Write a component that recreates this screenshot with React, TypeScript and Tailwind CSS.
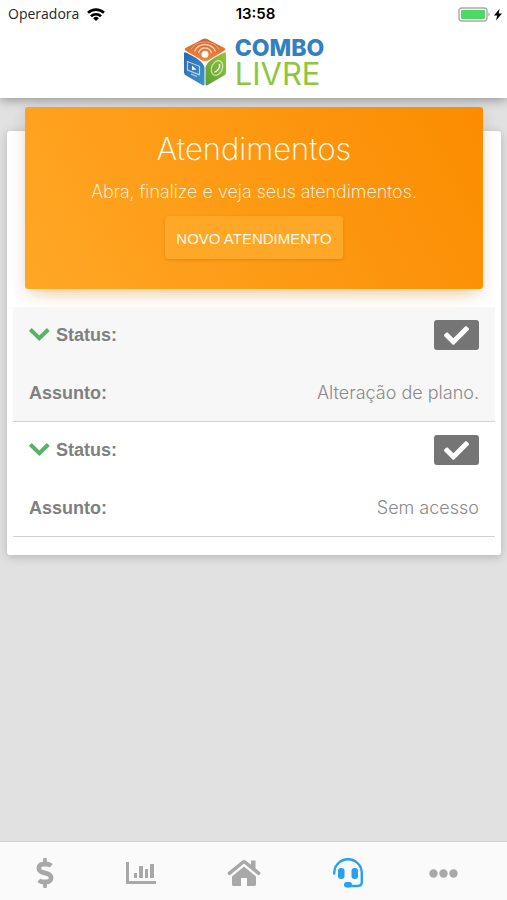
import type { ReactNode } from "react";
import { FaCheck, FaDollarSign } from "react-icons/fa";

type Ticket = { id: number; subject: string };

const tickets: Ticket[] = [
  { id: 1, subject: "Alteração de plano." },
  { id: 2, subject: "Sem acesso" },
];

function StatusBar() {
  return (
    <div className="grid h-7 grid-cols-3 items-center pl-2 pr-1 text-black">
      <div className="flex items-center gap-2 font-['Open_Sans',sans-serif] text-sm text-neutral-800">
        Operadora
        <svg viewBox="0 0 18 13" className="h-[13px] w-[18px]" fill="none" stroke="#000" strokeWidth="2.6">
          <path d="M1 4.8a11.6 11.6 0 0 1 16 0" />
          <path d="M4 8.2a7.3 7.3 0 0 1 10 0" />
          <path d="M9 12.9 6.2 10.2a4 4 0 0 1 5.6 0Z" fill="#000" stroke="none" />
        </svg>
      </div>
      <time className="text-center font-['Inter',sans-serif] text-[15px] font-semibold">13:58</time>
      <div className="flex items-center justify-end gap-[2px]">
        <svg viewBox="0 0 33 15" className="h-[15px] w-[33px]">
          <rect x="1" y="1" width="28" height="13" rx="3" fill="#fff" stroke="#aaa" strokeWidth="1.4" />
          <rect x="3" y="3" width="24" height="9" rx="1" fill="#4cd964" />
          <path d="M30.5 5.4q2 2 0 4.200Z" fill="#888" />
        </svg>
        <svg viewBox="0 0 10 13" className="h-[13px] w-[10px]">
          <path d="M6.600.8 1 7.500h3.200L3 12.400 9 5.500H5.700Z" />
        </svg>
      </div>
    </div>
  );
}

function Logo() {
  return (
    <div className="flex items-start justify-center gap-2">
      <svg viewBox="0 0 44 48" className="h-12 w-11">
        <defs>
          <linearGradient id="top" x1="0" y1="0" x2="0" y2="1">
            <stop offset="0" stopColor="#d9602a" />
            <stop offset="1" stopColor="#f0883c" />
          </linearGradient>
          <linearGradient id="left" x1="0" y1="0" x2="1" y2="1">
            <stop offset="0" stopColor="#2a6ba8" />
            <stop offset="1" stopColor="#3f93cf" />
          </linearGradient>
          <linearGradient id="right" x1="0" y1="1" x2="1" y2="0">
            <stop offset="0" stopColor="#5c9f2f" />
            <stop offset="1" stopColor="#93c83e" />
          </linearGradient>
        </defs>
        <path d="M20 .9q2-.9 4 0l17 8.900q2.400 1.500.2 3L25 22.500q-3 1.600-6 0L2.800 12.800q-2.200-1.500.2-3Z" fill="url(#top)" />
        <path d="M1 15.500q0-1.800 1.800-1 17.500 8 18.700 15v17q-.3 1.500-1.800.8L3 37.500q-2-1-2-3Z" fill="url(#left)" />
        <path d="M43 15.500q0-1.800-1.800-1-17.500 8-18.700 15v17q.3 1.500 1.800.8L41 37.500q2-1 2-3Z" fill="url(#right)" />
        <circle cx="22" cy="16.300" r="3.500" fill="#fff" />
        <g fill="none" stroke="#fff" opacity=".65">
          <path d="M15.500 15q1.500-5 6.500-5t6.500 5" strokeWidth="1.500" />
          <path d="M11.500 13.500q3-7 10.500-7t10.500 7" strokeWidth="1.400" />
          <path d="M8 11.500q4-7.500 14-7.500t14 7.500" strokeWidth="1" opacity=".6" />
          <path d="m4.500 23.500 12 4.800v8.500L4.500 32Z" strokeWidth="1.200" />
          <path d="m8 36 6 2.500" strokeWidth="1.200" />
          <ellipse cx="34" cy="30" rx="5.300" ry="7.600" transform="rotate(24 34 30)" strokeWidth="1.200" />
        </g>
        <path d="m9 27.500 4.500 4-4.500.4Z" fill="#fff" />
        <path d="M36.500 26c1 3.500-2.500 8-5 8" fill="none" stroke="#fff" strokeWidth="1.500" />
      </svg>
      <div className="font-['Inter',sans-serif]">
        <div className="text-[23px]/5 font-extrabold text-[#347fc1]">COMBO</div>
        <div className="pt-1 text-[31px]/6 font-normal text-[#8dc63f]">LIVRE</div>
      </div>
    </div>
  );
}

function TicketRow({ ticket }: { ticket: Ticket }) {
  return (
    <li className="border-b border-[#d2d2d2] px-4 text-lg odd:bg-[#f7f7f7]">
      <div className="flex h-14 items-center justify-between">
        <button type="button" className="flex items-center gap-[6px] font-bold text-[#808080]">
          <svg viewBox="0 0 21 14" className="h-[14px] w-[21px]" fill="none" stroke="#58b368" strokeWidth="4">
            <path d="m1.300 1.500 9 8.800 9-8.800" />
          </svg>
          Status:
        </button>
        <span role="img" aria-label="Finalizado" className="flex h-[30px] w-[45px] items-center justify-center rounded-[3px] bg-[#757575] text-white">
          <FaCheck size={25} />
        </span>
      </div>
      <div className="flex h-[58px] items-center justify-between pt-[2px]">
        <span className="font-bold text-[#808080]">Assunto:</span>
        <span className="font-['Inter',sans-serif] font-light text-[#8a8a8a]">{ticket.subject}</span>
      </div>
    </li>
  );
}

type TabProps = { label: string; active?: boolean; outer?: boolean; children: ReactNode };

function Tab({ label, active = false, outer = false, children }: TabProps) {
  return (
    <button
      type="button"
      aria-label={label}
      className={`flex h-full items-center justify-center ${outer ? "flex-5" : "flex-6"} ${active ? "text-[#26a0f0]" : "text-[#a8a8a8]"}`}
    >
      {children}
    </button>
  );
}

function TabBar() {
  return (
    <nav className="flex h-[59px] items-center border-t border-[#cfcfcf] bg-[#fafafa] pl-0.5 pr-5 pt-1">
      <Tab label="Faturas" outer>
        <FaDollarSign className="h-[30px] w-[18px]" />
      </Tab>
      <Tab label="Consumo">
        <svg viewBox="0 0 30 24" className="h-6 w-[30px]" fill="currentColor">
          <path d="M0 1h3v19h27v3H0ZM8 12h3v5H8ZM13 5h4v12h-4ZM19 8h3v9h-3ZM24 3h4v14h-4Z" />
        </svg>
      </Tab>
      <Tab label="Início">
        <svg viewBox="0 0 34 28" className="h-7 w-[34px]" fill="currentColor">
          <path d="m17 7.500 12 10v8q0 1.500-1.500 1.500H20v-8h-6v8H6.500Q5 27 5 25.500v-8Z" />
          <path d="M24 1.500h4.500v7.700l4.700 4q.8.700.1 1.500l-1 1.200q-.7.600-1.500 0L17 4.500 3.200 15.900q-.8.600-1.500 0l-1-1.200q-.6-.8.200-1.500L15.400 1.500q1.600-1.200 3.200 0L24 5.800Z" />
        </svg>
      </Tab>
      <Tab label="Atendimentos" active>
        <svg viewBox="0 0 30 30" className="h-[30px] w-[30px]" fill="currentColor">
          <path d="M1.200 16.500V15a13.800 13.800 0 0 1 27.600 0v9q0 4-4 4H14" fill="none" stroke="currentColor" strokeWidth="2.400" />
          <rect x="5" y="10" width="6.500" height="11" rx="3" />
          <rect x="18.500" y="10" width="6.500" height="11" rx="3" />
          <rect x="11" y="24" width="8" height="5.400" rx="2.700" />
        </svg>
      </Tab>
      <Tab label="Mais" outer>
        <svg viewBox="0 0 29 9" className="h-[9px] w-[29px]" fill="currentColor">
          <circle cx="4.500" cy="4.500" r="4.200" />
          <circle cx="14.500" cy="4.500" r="4.200" />
          <circle cx="24.500" cy="4.500" r="4.200" />
        </svg>
      </Tab>
    </nav>
  );
}

export default function App() {
  return (
    <div className="flex min-h-screen flex-col bg-[#e1e1e1] font-['Liberation_Sans',Arial,sans-serif]">
      <header className="h-[98px] bg-white shadow-[0_2px_10px_rgba(0,0,0,0.35)]">
        <StatusBar />
        <div className="pt-[10px]">
          <Logo />
        </div>
      </header>
      <main className="flex-1 pl-[7px] pr-[6px] pt-[33px]">
        <section className="flex flex-col rounded-[3px] bg-white px-[6px] pb-[18px] shadow-[0_2px_10px_rgba(0,0,0,0.2)]">
          <div className="mx-3 -mt-6 flex h-[182px] flex-col items-center rounded-[3px] bg-linear-[60deg,#ffa726,#fb8c00] pt-6 text-white shadow-[0_10px_18px_-10px_rgba(255,152,0,0.5),0_4px_16px_rgba(0,0,0,0.1)]">
            <h1 className="font-['Inter',sans-serif] text-[31px]/9 font-extralight">Atendimentos</h1>
            <p className="pt-[13px] font-['Inter',sans-serif] text-lg/6 font-extralight">Abra, finalize e veja seus atendimentos.</p>
            <button type="button" className="mt-3 h-[43px] rounded-[3px] bg-[#ffa726] px-[11px] pt-[3px] text-[15px] text-white/95 shadow-[0_1px_3px_rgba(120,90,40,0.3)]">
              NOVO ATENDIMENTO
            </button>
          </div>
          <ul className="mt-[18px]">
            {tickets.map((ticket) => (
              <TicketRow key={ticket.id} ticket={ticket} />
            ))}
          </ul>
        </section>
      </main>
      <TabBar />
    </div>
  );
}
